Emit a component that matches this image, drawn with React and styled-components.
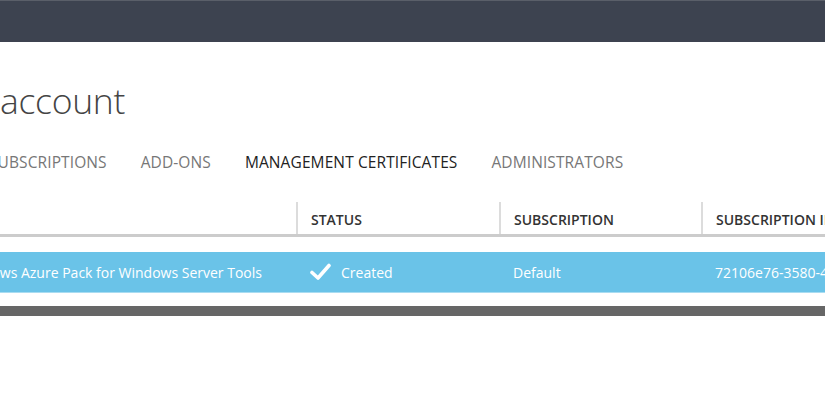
import styled, { createGlobalStyle } from "styled-components";

const Global = createGlobalStyle`
  html, body { margin: 0; padding: 0; background: #fff; overflow: hidden; }
  body { font-family: "Open Sans", "Segoe UI", "Liberation Sans", sans-serif; }
`;

const Page = styled.div`
  width: 825px;
  height: 407px;
  overflow: hidden;
  background: #fff;
`;

const TopBar = styled.div`
  height: 42px;
  background: #3d4350;
  border-top: 1px solid #5a5f69;
  box-sizing: border-box;
`;

const Title = styled.h1`
  margin: 0;
  padding: 36px 0 0 0;
  height: 100px;
  box-sizing: border-box;
  font-size: 35.5px;
  font-weight: 300;
  color: #444;
  line-height: 44px;
  letter-spacing: -0.3px;
`;

const Tabs = styled.nav`
  display: flex;
  gap: 34px;
  margin-left: -11px;
  height: 40px;
  align-items: center;
`;

const Tab = styled.span`
  font-size: 15.5px;
  color: ${(p) => (p.$active ? "#222" : "#777")};
  letter-spacing: 0.1px;
  white-space: nowrap;
`;

const Table = styled.div`
  margin-top: 20px;
  margin-left: -300px;
  width: 1400px;
`;

const Grid = styled.div`
  display: grid;
  grid-template-columns: 596px 203px 202px 1fr;
`;

const Head = styled(Grid)`
  height: 32px;
  border-bottom: 3px solid #cccccc;
`;

const HeadCell = styled.div`
  display: flex;
  align-items: center;
  padding-left: 13px;
  padding-top: 2px;
  font-size: 14px;
  font-weight: 600;
  color: #333;
  border-left: ${(p) => (p.$first ? "none" : "2px solid #dcdcdc")};
  white-space: nowrap;
`;

const Row = styled(Grid)`
  margin-top: 15px;
  height: 40px;
  background: #6ac3e8;
  border-bottom: 1px solid #a9dcf1;
`;

const Cell = styled.div`
  display: flex;
  align-items: center;
  gap: 10px;
  padding-left: ${(p) => (p.$first ? "0" : "14px")};
  justify-content: ${(p) => (p.$first ? "flex-end" : "flex-start")};
  padding-right: ${(p) => (p.$first ? "34px" : "0")};
  font-size: 14px;
  color: #fff;
  white-space: nowrap;
`;

const Footer = styled.div`
  margin-top: 13px;
  height: 10px;
  background: #666666;
`;

const Check = () => (
  <svg width="21" height="18" viewBox="0 0 21 18">
    <path d="M2 9.5 L8 15 L19 2.5" fill="none" stroke="#fff" strokeWidth="3.6" strokeLinecap="round" strokeLinejoin="round" />
  </svg>
);

export default function App() {
  return (
    <>
      <Global />
      <Page>
        <TopBar />
        <Title>account</Title>
        <Tabs>
          <Tab>SUBSCRIPTIONS</Tab>
          <Tab>ADD-ONS</Tab>
          <Tab $active>MANAGEMENT CERTIFICATES</Tab>
          <Tab>ADMINISTRATORS</Tab>
        </Tabs>
        <Table>
          <Head>
            <HeadCell $first>NAME</HeadCell>
            <HeadCell>STATUS</HeadCell>
            <HeadCell>SUBSCRIPTION</HeadCell>
            <HeadCell>SUBSCRIPTION ID</HeadCell>
          </Head>
          <Row>
            <Cell $first>Windows Azure Pack for Windows Server Tools</Cell>
            <Cell>
              <Check />
              Created
            </Cell>
            <Cell>Default</Cell>
            <Cell>72106e76-3580-4a6b-9c2e-1f0d8e5b7a13</Cell>
          </Row>
        </Table>
        <Footer />
      </Page>
    </>
  );
}
